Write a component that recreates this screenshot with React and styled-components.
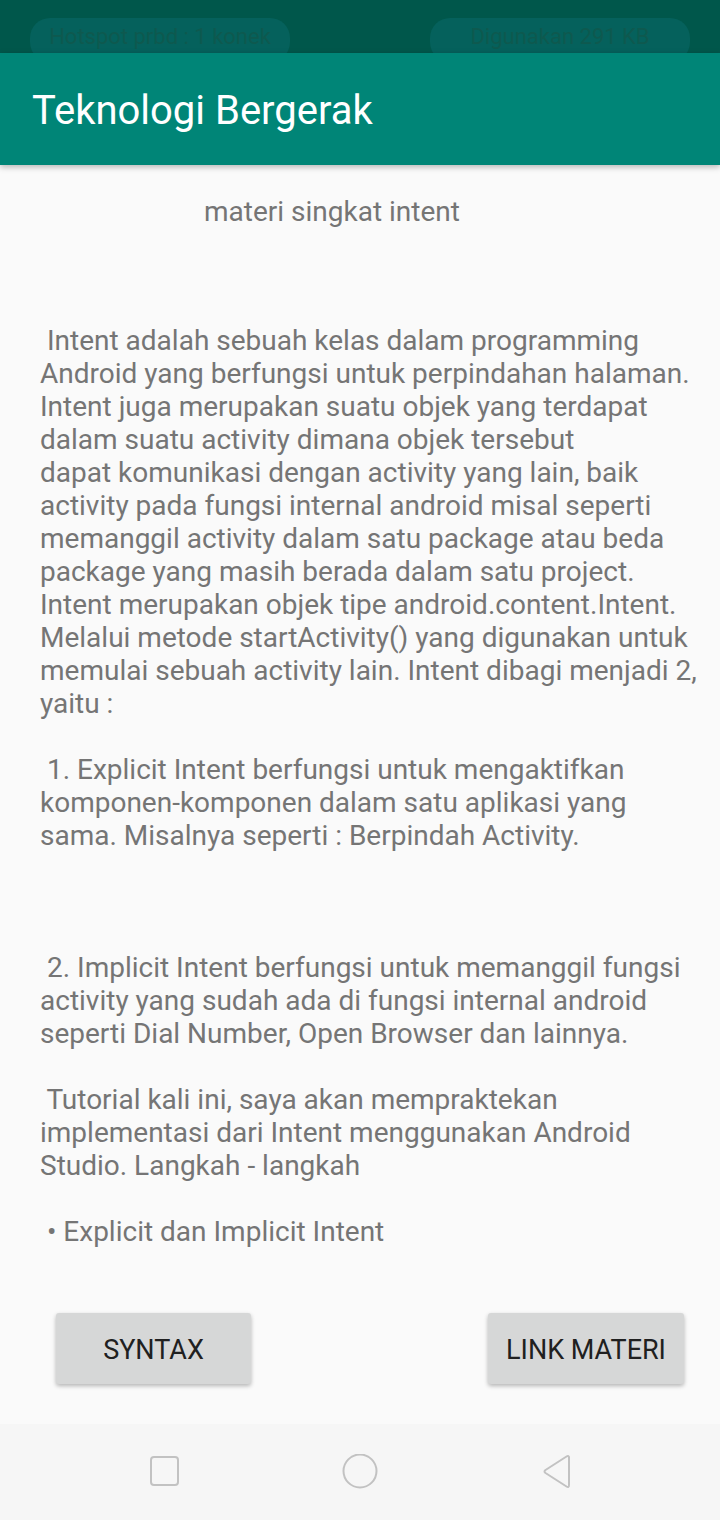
import React from "react";
import styled, { createGlobalStyle } from "styled-components";

const Global = createGlobalStyle`
  html, body { margin: 0; padding: 0; background: #fafafa; }
  body { font-family: Roboto, "Noto Sans", sans-serif; }
  #root { width: 720px; height: 1520px; }
`;

const Screen = styled.div`
  width: 720px;
  height: 1520px;
  display: flex;
  flex-direction: column;
  background: #fafafa;
  overflow: hidden;
`;

const StatusBar = styled.div`
  height: 53px;
  flex: none;
  background: #00574b;
  display: flex;
  justify-content: space-between;
  padding: 0 30px;
  box-sizing: border-box;
  overflow: hidden;
`;

const Pill = styled.div`
  margin-top: 18px;
  width: 260px;
  height: 44px;
  border-radius: 20px;
  background: #05615c;
  color: #0e594f;
  font-size: 22px;
  line-height: 38px;
  text-align: center;
  white-space: nowrap;
`;

const AppBar = styled.header`
  height: 112px;
  flex: none;
  background: #008577;
  display: flex;
  align-items: center;
  padding-left: 32px;
  box-sizing: border-box;
  box-shadow: 0 2px 6px rgba(0, 0, 0, 0.28);
  position: relative;
  z-index: 1;
`;

const AppTitle = styled.h1`
  margin: 0;
  font-size: 40px;
  font-weight: 400;
  color: #ffffff;
  padding-top: 2px;
`;

const Content = styled.main`
  flex: 1;
  display: flex;
  flex-direction: column;
  padding: 0 20px 0 40px;
`;

const Heading = styled.div`
  margin-top: 30px;
  margin-left: 164px;
  font-size: 28px;
  line-height: 33px;
  color: #757575;
  white-space: nowrap;
`;

const Body = styled.div`
  margin-top: 96px;
  font-size: 28px;
  line-height: 33px;
  color: #757575;
  white-space: pre;
`;

const ButtonRow = styled.div`
  margin-top: 65px;
  display: flex;
  justify-content: space-between;
  padding: 0 16px 0 16px;
`;

const Button = styled.button`
  width: ${(p) => p.$w}px;
  height: 71px;
  border: none;
  border-radius: 3px;
  background: #d6d7d7;
  color: #202020;
  font-family: Roboto, sans-serif;
  font-size: 27px;
  font-weight: 400;
  text-transform: uppercase;
  box-shadow: 0 2px 4px rgba(0, 0, 0, 0.28);
  padding: 3px 0 0;
`;

const NavBar = styled.nav`
  height: 96px;
  flex: none;
  background: #f6f6f6;
  display: flex;
  justify-content: center;
  align-items: center;
  gap: 160px;
`;

const NavIcon = styled.svg`
  width: 36px;
  height: 36px;
  display: block;
`;

const bodyText = ` Intent adalah sebuah kelas dalam programming
Android yang berfungsi untuk perpindahan halaman.
Intent juga merupakan suatu objek yang terdapat
dalam suatu activity dimana objek tersebut
dapat komunikasi dengan activity yang lain, baik
activity pada fungsi internal android misal seperti
memanggil activity dalam satu package atau beda
package yang masih berada dalam satu project.
Intent merupakan objek tipe android.content.Intent.
Melalui metode startActivity() yang digunakan untuk
memulai sebuah activity lain. Intent dibagi menjadi 2,
yaitu :

 1. Explicit Intent berfungsi untuk mengaktifkan
komponen-komponen dalam satu aplikasi yang
sama. Misalnya seperti : Berpindah Activity.



 2. Implicit Intent berfungsi untuk memanggil fungsi
activity yang sudah ada di fungsi internal android
seperti Dial Number, Open Browser dan lainnya.

 Tutorial kali ini, saya akan mempraktekan
implementasi dari Intent menggunakan Android
Studio. Langkah - langkah

 • Explicit dan Implicit Intent`;

export default function App() {
  return (
    <Screen>
      <Global />
      <StatusBar>
        <Pill>Hotspot prbd : 1 konek</Pill>
        <Pill>Digunakan 291 KB</Pill>
      </StatusBar>
      <AppBar>
        <AppTitle>Teknologi Bergerak</AppTitle>
      </AppBar>
      <Content>
        <Heading>materi singkat intent</Heading>
        <Body>{bodyText}</Body>
        <ButtonRow>
          <Button $w={195}>Syntax</Button>
          <Button $w={196}>Link Materi</Button>
        </ButtonRow>
      </Content>
      <NavBar>
        <NavIcon viewBox="0 0 36 36">
          <rect x="5" y="3" width="27" height="28" rx="3" fill="none" stroke="#c2c2c2" strokeWidth="2" />
        </NavIcon>
        <NavIcon viewBox="0 0 36 36">
          <circle cx="18" cy="17" r="16.5" fill="none" stroke="#c2c2c2" strokeWidth="2" />
        </NavIcon>
        <NavIcon viewBox="0 0 36 36">
          <path d="M31 3 L31 31 Q31 34 28.5 32.5 L7.5 19 Q5.5 17.5 7.5 16 L28.5 2.5 Q31 1 31 4 Z" fill="none" stroke="#c2c2c2" strokeWidth="2" strokeLinejoin="round" />
        </NavIcon>
      </NavBar>
    </Screen>
  );
}
